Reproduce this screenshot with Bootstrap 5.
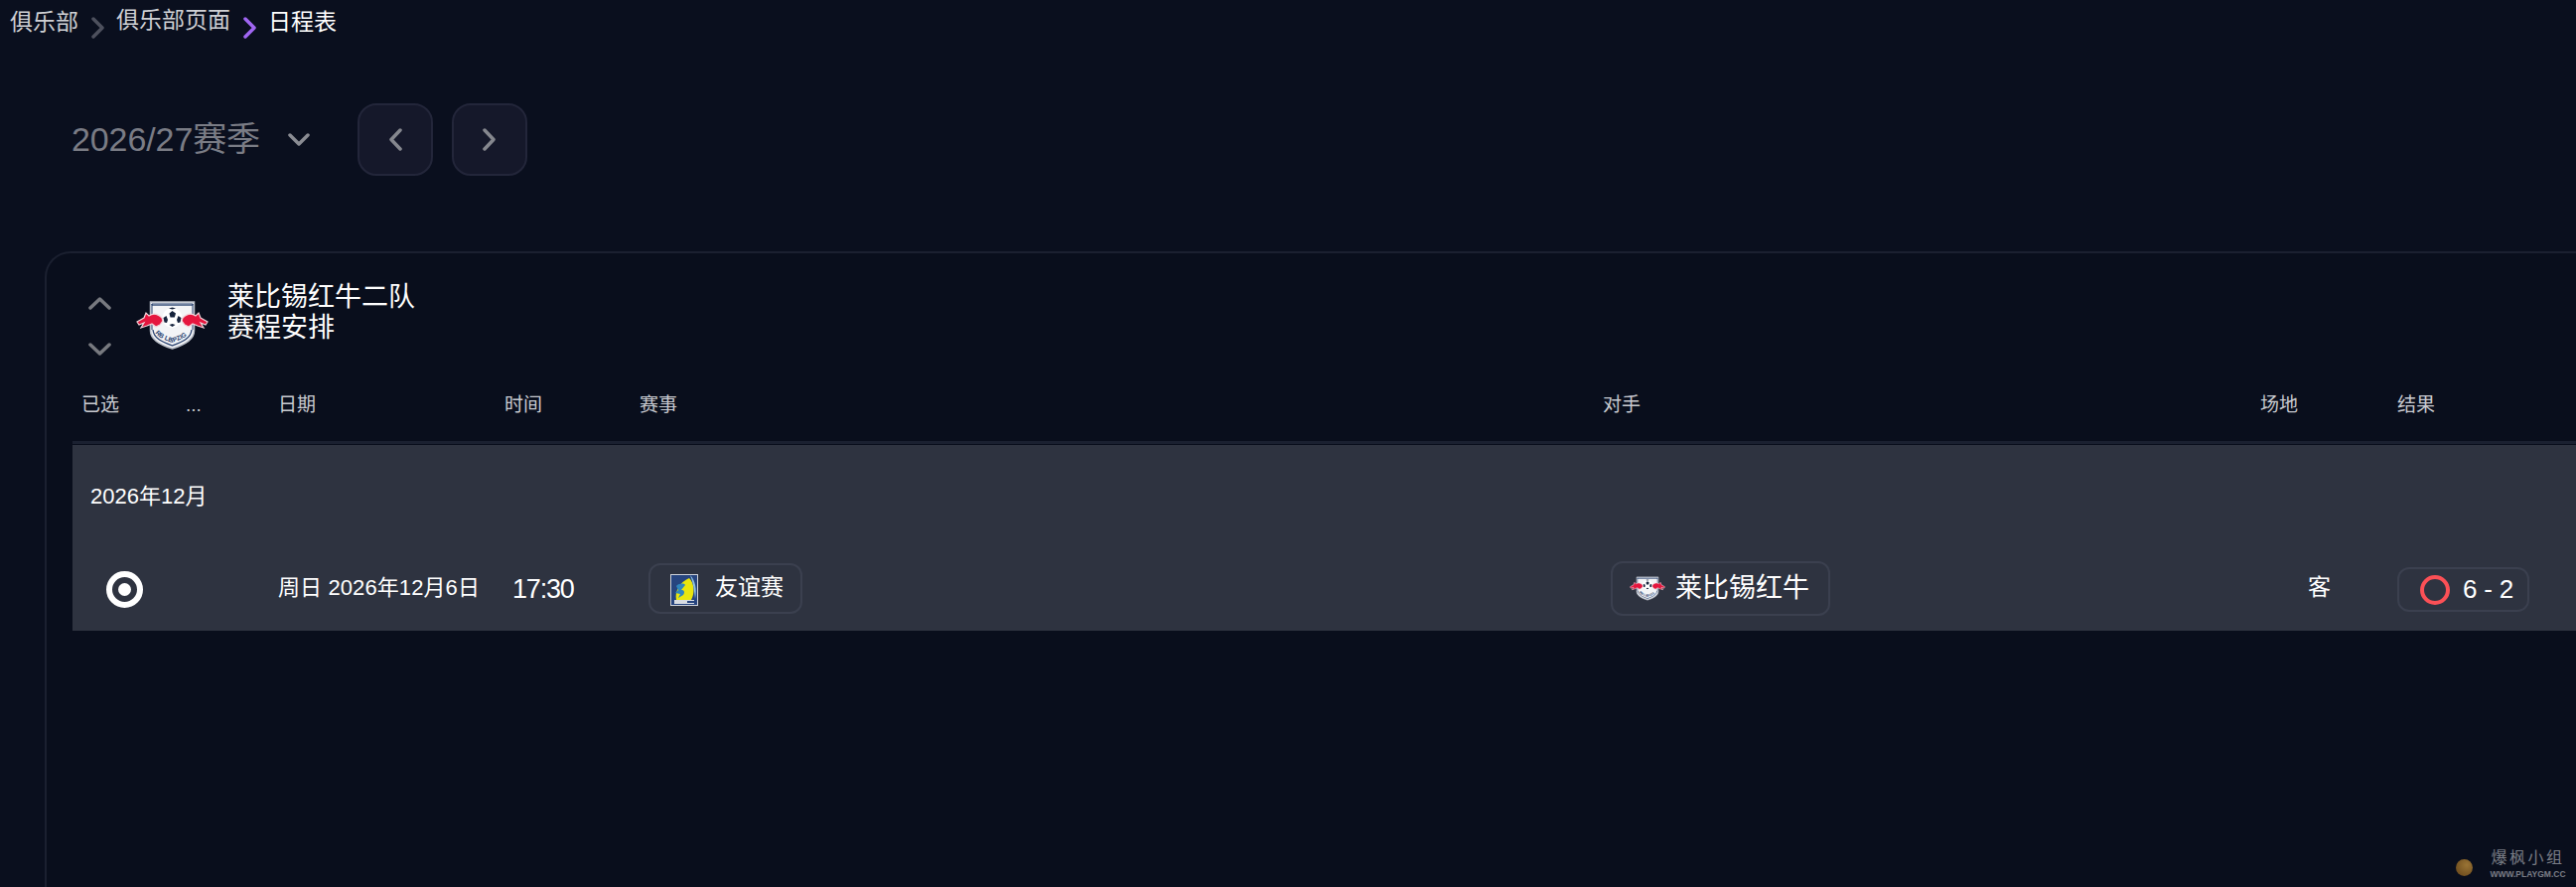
<!DOCTYPE html>
<html lang="zh-CN">
<head>
<meta charset="utf-8">
<title>日程表</title>
<link href="https://cdn.jsdelivr.net/npm/bootstrap@5.3.0/dist/css/bootstrap.min.css" rel="stylesheet">
<style>
html,body{height:100%;background:#0a0f1e;overflow:hidden}
body{font-family:"Liberation Sans","Noto Sans CJK SC",sans-serif;color:#fff}
.page-clip{height:893px;overflow:hidden;position:relative}
.crumbs{height:46px;padding:10px 0 0 10px;font-size:23px;line-height:24px;color:#cfd0d4}
.crumb-up{margin-top:-2px}
.crumb-now{color:#fff;margin-left:-1px}
.crumb-sep{width:13px;height:24px;margin:7px 12px 0 13px}
.crumb-sep.next{margin:7px 13px 0 13px}
.season-bar{padding:58px 0 0 72px;height:207px}
.season-row{height:73px}
.season-name{font-size:34px;line-height:38px;color:#7a7c85;margin:-2px 28px 0 0;letter-spacing:-.1px}
.season-caret{width:22px;height:15px;margin-right:48px}
.pager{width:76px;height:73px;padding:0;background:#15182a;border:2px solid #23263a;border-radius:19px;margin-right:19px}
.pager:hover{background:#15182a;border-color:#23263a}
.pager svg{width:14px;height:23px}
.panel-box{margin-left:45px;margin-right:-60px;height:760px;border:2px solid #1b2030;border-bottom:0;border-radius:26px 0 0 0;padding-left:26px;background:#090e1c}
.team-head{height:118px;padding-top:29px}
.sorters{width:23px;margin-left:16px;margin-right:25px;gap:33px;padding-top:14px}
.sorters svg{width:23px;height:14px;display:block}
.crest-big{width:73px;height:49px;margin-top:19px;margin-right:19px}
.team-title{font-size:27px;line-height:31px}
.sched-cols{display:grid;grid-template-columns:114px 93px 228px 136px 970px 662px 138px 240px}
.sched-head{height:74px;border-bottom:3px solid #1a2030;font-size:19px;line-height:22px;color:#c9cbd1;padding-top:24px}
.sched-head .first{padding-left:9px}
.sched-band{margin-top:1px;background:#2e3340;height:187px}
.month-label{height:102px;padding:40px 0 0 18px;font-size:22px;line-height:24px}
.fixture{height:85px;align-items:center}
.pick-ring{width:37px;height:37px;margin:2px 0 0 34px;border-radius:50%;border:6px solid #fff;display:flex;align-items:center;justify-content:center}
.pick-ring i{display:block;width:13px;height:13px;border-radius:50%;background:#fff}
.fix-date{font-size:22px;line-height:26px;white-space:nowrap;letter-spacing:.1px;margin-top:-2px}
.fix-time{font-size:27px;line-height:30px;padding-left:8px;letter-spacing:-1.2px}
.chip{display:inline-flex;align-items:center;border:2px solid #3b404f;border-radius:12px}
.chip-comp{margin-left:9px;width:155px;height:51px;padding-left:20px;font-size:23px;line-height:27px}
.chip-comp svg{width:28px;height:32px;margin:2px 17px 0 0}
.chip-comp em{font-style:normal;margin-top:-2px}
.chip-team{margin-left:8px;width:221px;height:55px;padding-left:17px;font-size:27px}
.chip-team svg{width:36px;height:25px;margin-right:10px}
.fix-venue{font-size:23px;padding-left:48px;margin-top:-2px}
.chip-result{width:133px;height:45px;padding-left:21px;font-size:26px;letter-spacing:-.2px;margin-top:2px}
.result-ring{width:30px;height:30px;border:4px solid #fb5056;border-radius:50%;margin-right:13px}
.mark-logo{position:absolute;left:2473px;top:856px;display:flex;align-items:center;opacity:.7}
.mark-ball{width:17px;height:17px;border-radius:50%;background:radial-gradient(circle at 65% 35%,#d8a040,#8a5a18);margin-right:16px;margin-top:7px}
.mark-text{width:79px;text-align:center;color:#a9acb3;line-height:1}
.mark-cn{font-family:"Liberation Serif","Noto Sans CJK SC",serif;font-size:16px;letter-spacing:2.500px;white-space:nowrap}
.mark-en{font-size:8.500px;font-weight:700;letter-spacing:0;margin-top:4px;white-space:nowrap}
</style>
</head>
<body>
<svg width="0" height="0" class="d-block position-absolute">
<defs>
<symbol id="rb-crest" viewBox="0 0 73 49">
<path d="M14.500 1h44v29c0 9-9 14-22 18C23.500 44 14.500 39 14.500 30z" fill="#f3f4f6" stroke="#b9bec8" stroke-width="1.500"/>
<path d="M16 3h41v1.200H16zM16 3v26M57 3v26" fill="none" stroke="#27406e" stroke-width="1"/>
<path d="M17 29c1 9 9 12 19.500 16C47 41 55 38 56 29" fill="none" stroke="#27406e" stroke-width="1.300"/>
<path id="rb-arc" d="M18 29c2 7 10 10 18.500 13C45 39 53 36 55 29" fill="none"/>
<text font-size="6.500" font-weight="700" fill="#27406e" font-family="Liberation Sans"><textPath href="#rb-arc" startOffset="7%">RB LEIPZIG</textPath></text>
<circle cx="36.500" cy="17" r="10" fill="#fff"/>
<path d="M33.500 12.500l3-2.500 3.500 2.500-1.200 4h-4.300zM27.500 17l3-2 1.500 4-1 3-2.500-.5zM45.500 17l-3-2-1.500 4 1 3 2.500-.5zM33 7.500l3.500 1 3.500-1-3.500-1zM33.500 24l3 2 3-2-3-1z" fill="#16233c"/>
<path d="M26 17C22 13 17 12 13 15l-3-3-2 5-7 4 2 3 5-2-3 5 6-2 5-2 4 3 4-2 3-4z" fill="#e5163e" stroke="#f3d3d9" stroke-width="1.200"/>
<path d="M47 17c4-4 9-5 13-2l3-3 2 5 7 4-2 3-5-2 3 5-6-2-5-2-4 3-4-2-3-4z" fill="#e5163e" stroke="#f3d3d9" stroke-width="1.200"/>
</symbol>
</defs>
</svg>
<div class="page-clip">
  <nav class="crumbs d-flex align-items-start">
    <span>俱乐部</span>
    <svg class="crumb-sep" viewBox="0 0 13 24"><path d="M2 2l9 9-9 9" fill="none" stroke="#4d505d" stroke-width="3.500" stroke-linecap="round" stroke-linejoin="round"/></svg>
    <span class="crumb-up">俱乐部页面</span>
    <svg class="crumb-sep next" viewBox="0 0 13 24"><path d="M2 2l9 9-9 9" fill="none" stroke="#a066f2" stroke-width="3.500" stroke-linecap="round" stroke-linejoin="round"/></svg>
    <span class="crumb-now">日程表</span>
  </nav>

  <div class="season-bar d-flex align-items-start">
    <div class="season-row d-flex align-items-center">
      <span class="season-name">2026/27赛季</span>
      <svg class="season-caret" viewBox="0 0 22 15"><path d="M2 3l9 9 9-9" fill="none" stroke="#8a8c93" stroke-width="3.500" stroke-linecap="round" stroke-linejoin="round"/></svg>
    </div>
    <button type="button" class="btn pager d-flex align-items-center justify-content-center" aria-label="上一个"><svg viewBox="0 0 14 23"><path d="M12 2L3 11.500 12 21" fill="none" stroke="#85878e" stroke-width="3.500" stroke-linecap="round" stroke-linejoin="round"/></svg></button>
    <button type="button" class="btn pager d-flex align-items-center justify-content-center" aria-label="下一个"><svg viewBox="0 0 14 23"><path d="M2 2l9 9.500L2 21" fill="none" stroke="#85878e" stroke-width="3.500" stroke-linecap="round" stroke-linejoin="round"/></svg></button>
  </div>

  <section class="panel-box">
    <div class="team-head d-flex align-items-start">
      <div class="sorters d-flex flex-column">
        <svg viewBox="0 0 23 14"><path d="M2 12L11.500 3 21 12" fill="none" stroke="#77797f" stroke-width="3.500" stroke-linecap="round" stroke-linejoin="round"/></svg>
        <svg viewBox="0 0 23 14"><path d="M2 2l9.500 9L21 2" fill="none" stroke="#77797f" stroke-width="3.500" stroke-linecap="round" stroke-linejoin="round"/></svg>
      </div>
      <svg class="crest-big"><use href="#rb-crest"/></svg>
      <div class="team-title">莱比锡红牛二队<br>赛程安排</div>
    </div>

    <div class="sched-cols sched-head">
      <div class="first">已选</div><div>...</div><div>日期</div><div>时间</div><div>赛事</div><div>对手</div><div>场地</div><div>结果</div>
    </div>

    <div class="sched-band">
      <div class="month-label">2026年12月</div>
      <div class="sched-cols fixture">
        <div><span class="pick-ring"><i></i></span></div>
        <div></div>
        <div class="fix-date">周日 2026年12月6日</div>
        <div class="fix-time">17:30</div>
        <div><span class="chip chip-comp">
          <svg viewBox="0 0 28 32"><rect x=".5" y=".5" width="27" height="31" fill="#27457f" stroke="#cfd3da"/><path d="M19 4c5 5 6 15 2 22H6C4 17 10 8 19 4z" fill="#e9e60e"/><path d="M20 1c5 5 7 14 5 24-1-9-2-17-5-24z" fill="#8cc0e2"/><path d="M6 12c3-3 8-3 9-1l-4 5c3 0 4 2 2 5l-5 3 2-4-5-1 3-3z" fill="#2f86bd"/><rect x="4" y="26" width="20" height="4" fill="#d8dce2"/><rect x="17" y="27" width="8" height="2" fill="#27457f"/></svg>
          <em>友谊赛</em></span></div>
        <div><span class="chip chip-team"><svg><use href="#rb-crest"/></svg>莱比锡红牛</span></div>
        <div class="fix-venue">客</div>
        <div><span class="chip chip-result"><span class="result-ring"></span>6 - 2</span></div>
      </div>
    </div>
  </section>

  <div class="mark-logo" aria-label="水印">
    <span class="mark-ball"></span>
    <div class="mark-text"><div class="mark-cn">爆枫小组</div><div class="mark-en">WWW.PLAYGM.CC</div></div>
  </div>
</div>
</body>
</html>
